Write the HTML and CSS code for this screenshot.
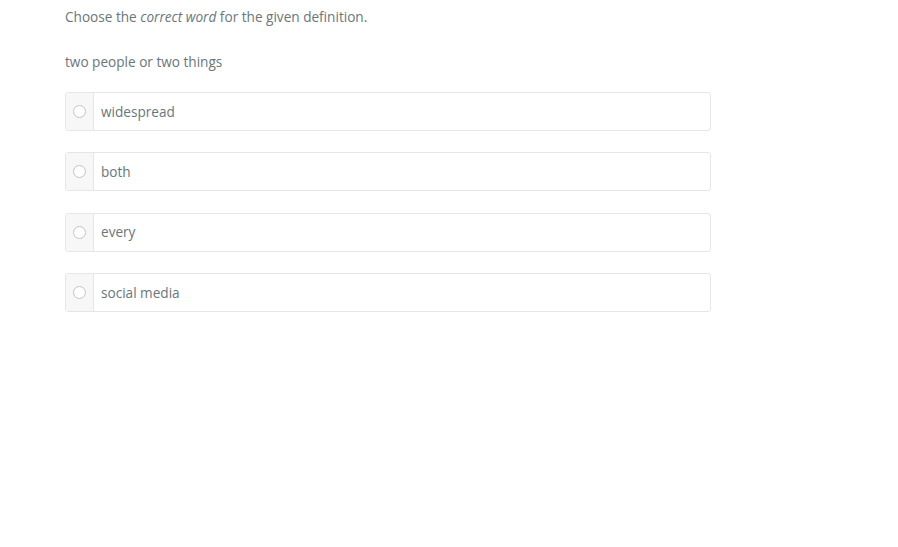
FILE: index.html
```html
<!DOCTYPE html>
<html>
<head>
<meta charset="utf-8">
<link rel="stylesheet" href="styles.css">
</head>
<body>
<div class="quiz">
  <p class="instr">Choose the <em>correct word</em> for the given definition.</p>
  <p class="def">two people or two things</p>
  <div class="options">
    <label class="opt"><span class="radio-cell"><span class="radio"></span></span><span class="label">widespread</span></label>
    <label class="opt"><span class="radio-cell"><span class="radio"></span></span><span class="label">both</span></label>
    <label class="opt"><span class="radio-cell"><span class="radio"></span></span><span class="label">every</span></label>
    <label class="opt"><span class="radio-cell"><span class="radio"></span></span><span class="label">social media</span></label>
  </div>
</div>
</body>
</html>
```

FILE: styles.css
```css
html, body {
  margin: 0;
  padding: 0;
  background: #ffffff;
}
body {
  font-family: "Open Sans", "Noto Sans", sans-serif;
  font-size: 13.6px;
  color: #69767a;
}
.quiz {
  width: 646px;
  padding: 7px 0 0 65px;
}
.instr {
  margin: 0;
  line-height: 20px;
}
.instr em {
  font-style: italic;
}
.def {
  margin: 25px 0 0;
  line-height: 20px;
}
.options {
  margin-top: 20px;
  display: flex;
  flex-direction: column;
  gap: 21.4px;
}
.opt {
  display: flex;
  height: 37px;
  border: 1px solid #e6e6e6;
  border-radius: 3px;
  overflow: hidden;
}
.radio-cell {
  width: 27px;
  background: #f7f7f7;
  border-right: 1px solid #e6e6e6;
  display: flex;
  align-items: center;
  justify-content: center;
}
.radio {
  width: 11px;
  height: 11px;
  border: 1px solid #c4c4c4;
  border-radius: 50%;
  background: #ffffff;
}
.label {
  display: flex;
  align-items: center;
  padding-left: 7px;
  line-height: 20px;
}
```
